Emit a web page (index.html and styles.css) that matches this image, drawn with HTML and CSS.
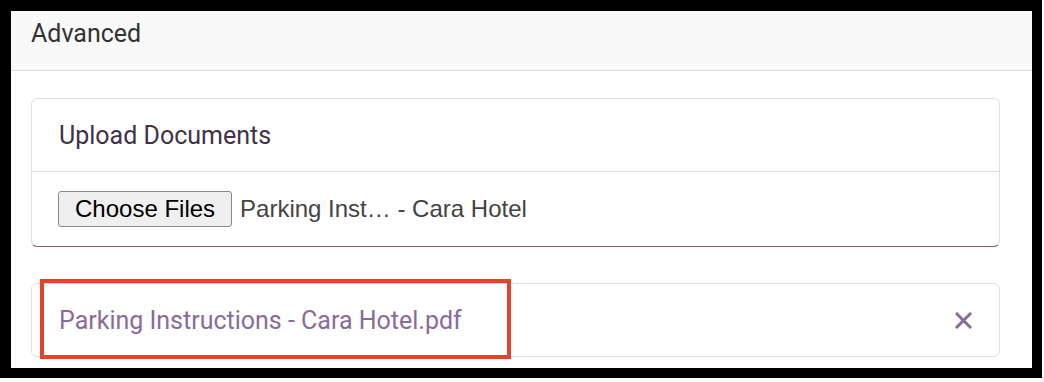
FILE: index.html
```html
<!DOCTYPE html>
<html lang="en">
<head>
    <meta charset="UTF-8">
    <meta name="viewport" content="width=device-width, initial-scale=1.0">
    <title>Advanced</title>
    <link rel="stylesheet" href="styles.css">
</head>
<body>
    <div class="frame">
        <div class="section-head">Advanced</div>

        <div class="section-body">
            <div class="card upload">
                <div class="card-head">Upload Documents</div>
                <div class="card-body">
                    <button class="file-btn" type="button">Choose Files</button>
                    <span class="file-name">Parking Inst… - Cara Hotel</span>
                </div>
            </div>

            <div class="card doc">
                <a class="doc-link" href="#">Parking Instructions - Cara Hotel.pdf</a>
                <svg class="remove" width="17" height="17" viewBox="0 0 17 17">
                    <path d="M2 2 L15 15 M15 2 L2 15" stroke="#8a6b9b" stroke-width="3" stroke-linecap="square" fill="none"/>
                </svg>
                <div class="highlight"></div>
            </div>
        </div>
    </div>
</body>
</html>
```

FILE: styles.css
```css
body {
    margin: 0;
    background: #fff;
    font-family: Roboto, "Noto Sans", sans-serif;
}
.frame {
    width: 1021px;
    height: 357px;
    border-style: solid;
    border-color: #000;
    border-width: 11px 10px 10px 11px;
    background: #fff;
    overflow: hidden;
}
.section-head {
    height: 51px;
    padding: 8px 0 0 20px;
    background: #f9f9f9;
    border-bottom: 1px solid #dcdcdc;
    font-size: 25px;
    line-height: 29px;
    color: #333;
}
.section-body {
    padding: 27px 32px 0 20px;
}
.card {
    border: 1px solid #dedede;
    border-radius: 6px;
    background: #fff;
}
.upload {
    border-bottom-color: #875a7b;
}
.card-head {
    height: 72px;
    border-bottom: 1px solid #dedede;
    padding-left: 27px;
    display: flex;
    align-items: center;
    font-size: 25px;
    color: #3f3249;
}
.card-body {
    height: 74px;
    padding-left: 26px;
    display: flex;
    align-items: center;
    gap: 8px;
    font-family: "Liberation Sans", Arial, sans-serif;
    font-size: 24px;
}
.file-btn {
    height: 36px;
    padding: 0 16px;
    font-family: "Liberation Sans", Arial, sans-serif;
    font-size: 24px;
    color: #000;
    background: #efefef;
    border: 1px solid #8a8a8a;
    border-radius: 3px;
}
.file-name {
    color: #444;
}
.doc {
    position: relative;
    margin-top: 36px;
    height: 72px;
    padding: 0 27px;
    display: flex;
    align-items: center;
    justify-content: space-between;
}
.doc-link {
    font-size: 25px;
    color: #8a6b9b;
    text-decoration: none;
    margin-top: 0;
}
.highlight {
    position: absolute;
    left: 8px;
    top: -5px;
    width: 463px;
    height: 72px;
    border: 4px solid #e2432a;
}
```
